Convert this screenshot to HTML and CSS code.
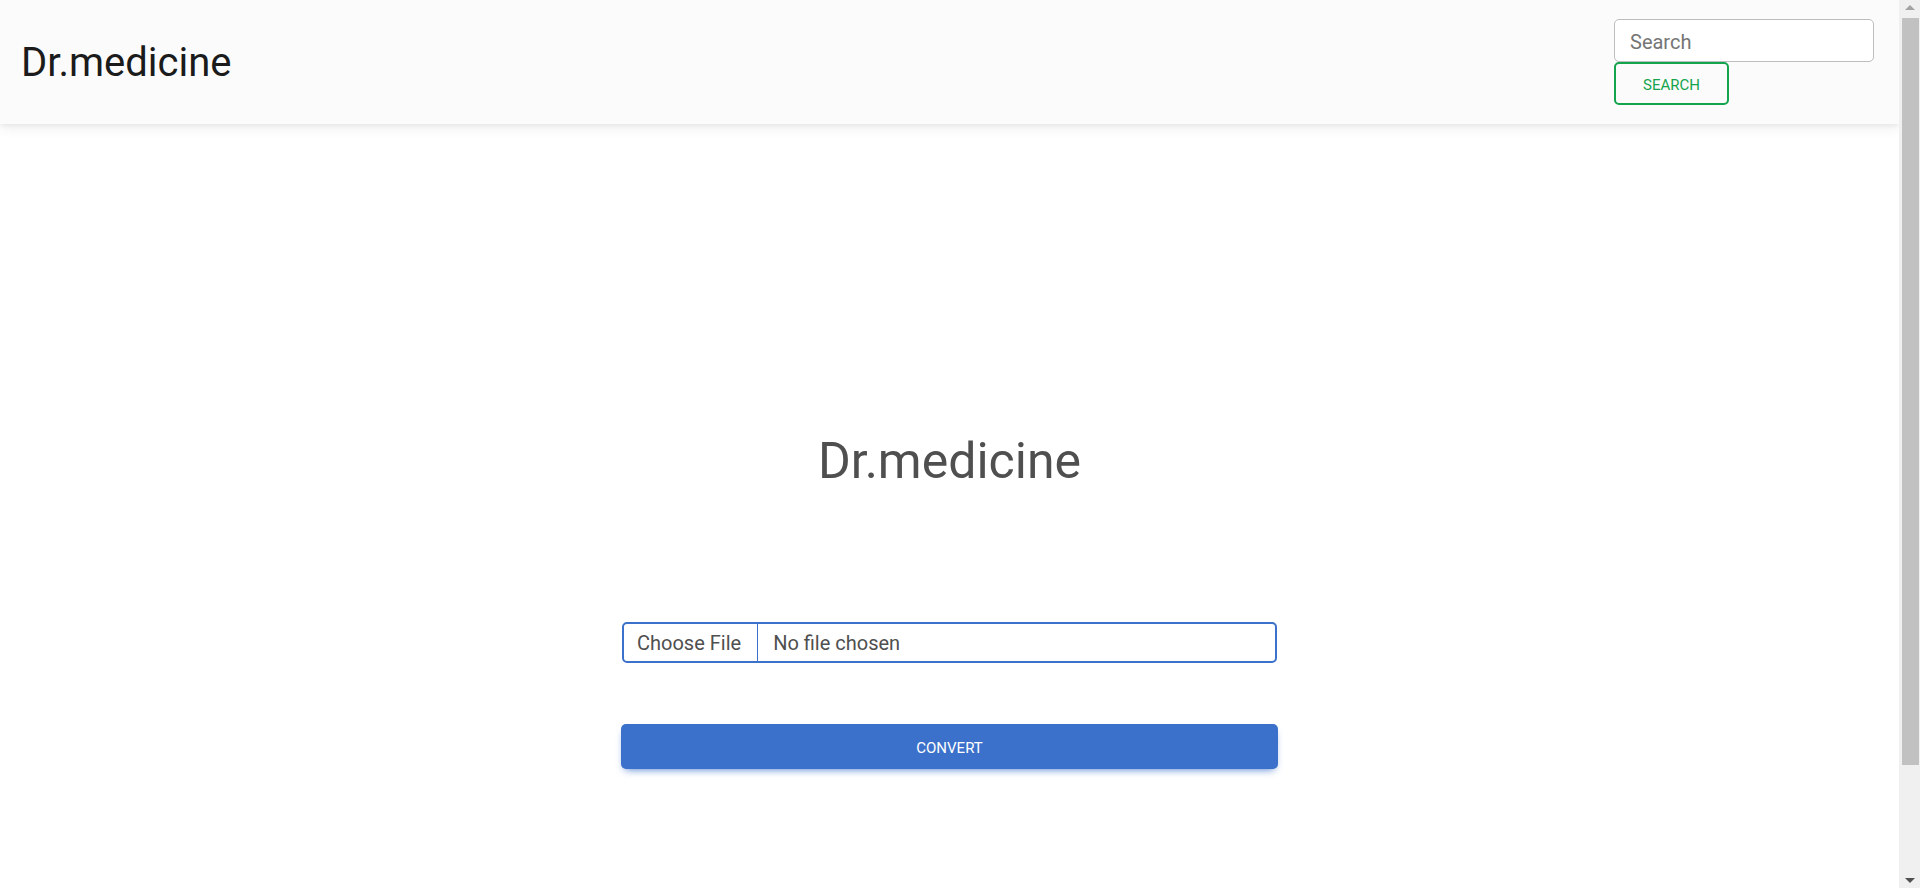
FILE: index.html
```html
<!DOCTYPE html>
<html lang="en">
<head>
<meta charset="utf-8">
<title>Dr.medicine</title>
<link rel="stylesheet" href="styles.css">
</head>
<body>
<header class="navbar">
  <a class="brand" href="#">Dr.medicine</a>
  <form class="search-form">
    <input class="search-input" type="text" placeholder="Search">
    <button class="btn-search" type="button">Search</button>
  </form>
</header>
<main class="main">
  <h1 class="title">Dr.medicine</h1>
  <div class="upload">
    <label class="file-field">
      <span class="file-btn">Choose File</span>
      <span class="file-name">No file chosen</span>
    </label>
    <button class="btn-convert" type="button">Convert</button>
  </div>
</main>
<div class="scrollbar" aria-hidden="true">
  <span class="sb-arrow sb-up"></span>
  <span class="sb-thumb"></span>
  <span class="sb-arrow sb-down"></span>
</div>
</body>
</html>
```

FILE: styles.css
```css
html, body {
  margin: 0;
  padding: 0;
}
body {
  font-family: Roboto, "Liberation Sans", sans-serif;
  background: #ffffff;
  color: #4f4f4f;
  margin-right: 21px;
}
.navbar {
  height: 124px;
  background: #fbfbfb;
  box-shadow: 0 4px 12px 0 rgba(0,0,0,0.07), 0 2px 4px rgba(0,0,0,0.05);
  display: flex;
  align-items: center;
  justify-content: space-between;
  padding: 0 25px 0 21px;
  position: relative;
  z-index: 2;
}
.brand {
  font-size: 40px;
  line-height: 48px;
  color: #1b1b1b;
  text-decoration: none;
  margin-top: 2px;
}
.search-form {
  display: flex;
  flex-direction: column;
  align-items: flex-start;
  width: 260px;
}
.search-input {
  box-sizing: border-box;
  width: 260px;
  height: 43px;
  border: 1px solid #bdbdbd;
  border-radius: 5px;
  background: #fff;
  font-family: Roboto, "Liberation Sans", sans-serif;
  font-size: 20px;
  padding: 2px 15px 0;
  color: #4f4f4f;
  outline: none;
}
.search-input::placeholder {
  color: #757575;
}
.btn-search {
  box-sizing: border-box;
  width: 115px;
  height: 43px;
  border: 2px solid #14a44d;
  border-radius: 5px;
  background: transparent;
  color: #14a44d;
  font-family: Roboto, "Liberation Sans", sans-serif;
  font-size: 15px;
  text-transform: uppercase;
  padding: 3px 0 0;
}
.main {
  min-height: 892px;
  display: flex;
  flex-direction: column;
  align-items: center;
  padding-top: 307px;
  box-sizing: border-box;
}
.title {
  margin: 0;
  font-size: 50px;
  font-weight: 400;
  line-height: 60px;
  color: #4f4f4f;
}
.upload {
  width: 657px;
  margin-top: 131px;
  display: flex;
  flex-direction: column;
  gap: 61px;
}
.file-field {
  box-sizing: border-box;
  height: 41px;
  margin: 0 1px;
  border: 2px solid #3b71ca;
  border-radius: 5px;
  display: flex;
  align-items: stretch;
  font-size: 20px;
  color: #4f4f4f;
  background: #fff;
}
.file-btn {
  display: flex;
  align-items: center;
  padding: 0 16px 0 13px;
  border-right: 1px solid #3b71ca;
}
.file-name {
  display: flex;
  align-items: center;
  padding-left: 15px;
}
.btn-convert {
  height: 45px;
  border: none;
  border-radius: 5px;
  background: #3b71ca;
  color: #fff;
  font-family: Roboto, "Liberation Sans", sans-serif;
  font-size: 15px;
  text-transform: uppercase;
  padding: 2px 0 0;
  box-shadow: 0 4px 9px -4px #3b71ca;
}

/* fake classic scrollbar overlaying the right edge */
.scrollbar {
  position: fixed;
  top: 0;
  right: 0;
  width: 21px;
  height: 100vh;
  background: #f0f0f0;
  z-index: 10;
  display: flex;
  flex-direction: column;
  align-items: center;
}
.sb-thumb {
  width: 17px;
  margin-left: 1px;
  height: 747px;
  background: #c1c1c1;
}
.sb-arrow {
  width: 0;
  height: 0;
  margin-left: 1px;
  border-left: 5px solid transparent;
  border-right: 5px solid transparent;
}
.sb-up {
  margin-top: 5px;
  margin-bottom: 8px;
  border-bottom: 5px solid #a3a3a3;
}
.sb-down {
  margin-top: auto;
  margin-bottom: 5px;
  border-top: 5px solid #505050;
}
```
